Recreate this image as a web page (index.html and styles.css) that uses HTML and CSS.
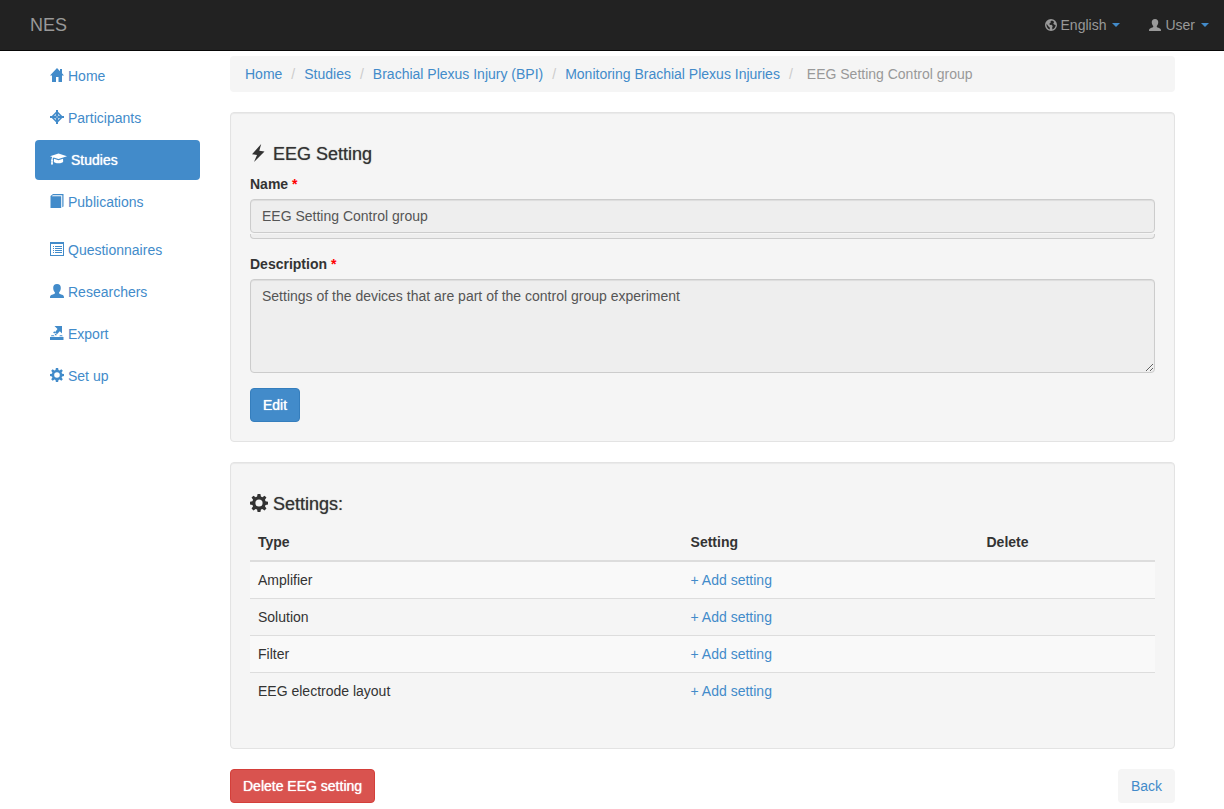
FILE: index.html
```
<!DOCTYPE html>
<html lang="en">
<head>
<meta charset="utf-8">
<meta name="viewport" content="width=device-width, initial-scale=1">
<title>NES - EEG Setting</title>
<link rel="stylesheet" href="styles.css">
</head>
<body>
<svg class="sprite" aria-hidden="true">
  <symbol id="i-home" viewBox="0 0 14 14"><path d="M7 0 0 7.500h2V14h4V9h2.500v5H12V7.500h2l-2-2.200V1h-2v2.200z"/></symbol>
  <symbol id="i-target" viewBox="0 0 14 14"><path fill-rule="evenodd" d="M6 0h2v1.800L12.200 6H14v2h-1.800L8 12.200V14H6v-1.800L1.800 8H0V6h1.800L6 1.800zM5.800 4 4 5.800h1.800zM8.200 4v1.800H10zM4 8.200 5.800 10V8.200zM8.200 8.200V10L10 8.200zM6.500 6.500v1h1v-1z"/></symbol>
  <symbol id="i-cap" viewBox="0 0 17 14"><path d="M8.500 1.500 17 4.200 8.500 7 3.600 5.400C2.800 6 2.600 6.800 2.600 7.600c.6.400.6 1.100.1 1.500L3 12.500H1l.4-3.400c-.5-.4-.5-1.100.1-1.500 0-1 .2-1.900.8-2.600L0 4.200zM4 6.700l4.500 1.500L13 6.700l.2 2.700c0 2.400-9.400 2.400-9.400 0z"/></symbol>
  <symbol id="i-book" viewBox="0 0 14 14"><path d="M3 0h10.500v12.500l-1.200.8V1.300H2.800L1.800 2.200H11.200V14H.5V2z"/></symbol>
  <symbol id="i-list" viewBox="0 0 14 14"><path fill-rule="evenodd" d="M0 0h14v14H0zM1 2v11h12V2z"/><path d="M3 4h1v1H3zM5 4h7v1H5zM3 6h1v1H3zM5 6h7v1H5zM3 8h1v1H3zM5 8h7v1H5zM3 10h1v1H3zM5 10h7v1H5z"/></symbol>
  <symbol id="i-user" viewBox="0 0 14 14"><path d="M7 0c2.600 0 3.800 1.600 3.800 3.900 0 1.800-.7 3.300-1.700 4.300v1.200c1 .7 3 1.100 4 1.900.7.500.9 1.300.9 2.700H0c0-1.400.2-2.200.9-2.700 1-.8 3-1.200 4-1.900V8.200c-1-1-1.700-2.500-1.700-4.300C3.200 1.600 4.400 0 7 0z"/></symbol>
  <symbol id="i-export" viewBox="0 0 14 14"><path d="M4.500 0H12v7.500L9.800 5.300 7 8.300 5 6.300 7.500 3zM4.300 5.200l1.200 1.200-1.200 1.200-1.200-1.200zM5.500 7.500 7 9 5.800 9.600 4.600 8.600z"/><path d="M0 11h13.500v3H0zM1.500 9.200h2.300l.8 1H.8zM10 9.200h2l.8 1H9.200z"/></symbol>
  <symbol id="i-cog" viewBox="0 0 14 14"><path fill-rule="evenodd" d="M5.900 0h2.200l.4 2 1.100.5L11.300 1.300l1.500 1.500-1.200 1.700.5 1.200 1.900.3v2.100l-1.900.4-.5 1.100 1.200 1.700-1.500 1.500-1.700-1.200-1.100.5-.4 1.900H5.900l-.4-1.900-1.100-.5-1.700 1.200-1.500-1.500 1.200-1.700-.5-1.100L0 8.100V6l1.900-.3.500-1.200L1.200 2.800l1.500-1.500 1.700 1.200L5.500 2zM7 4.200a2.800 2.800 0 1 0 0 5.600 2.800 2.800 0 0 0 0-5.600z"/></symbol>
  <symbol id="i-globe" viewBox="0 0 14 14"><path fill-rule="evenodd" d="M7 0a7 7 0 1 1 0 14A7 7 0 0 1 7 0zM8 1.700 6.300 3l.4 1.200L5 5.500 5.800 7 7.500 6.800 9 8.300 8.400 10l.2 2.200c2.200-.7 3.800-2.700 3.800-5.200L10.500 6.500l-.8-1.300 1-1.800C9.900 2.500 9 1.900 8 1.700zM1.900 5.600C1.200 8.700 3 11.500 5.700 12.300L5.500 10 3.800 8.500z"/></symbol>
  <symbol id="i-flash" viewBox="0 0 18 18"><path d="M11.200 0 2 10.300l5 .7-3 7L14.500 7.500 9.300 6.700z"/></symbol>
</svg>

<header class="navbar">
  <a class="brand" href="#">NES</a>
  <nav class="nav-menus" aria-label="Account">
    <button class="nav-toggle" type="button"><svg class="icon icon-sm" aria-hidden="true"><use href="#i-globe"/></svg>English<span class="caret"></span></button>
    <button class="nav-toggle" type="button"><svg class="icon icon-sm" aria-hidden="true"><use href="#i-user"/></svg>User<span class="caret"></span></button>
  </nav>
</header>

<div class="layout">
  <nav class="sidebar" aria-label="Main">
    <ul class="pills">
      <li><a href="#"><svg class="icon" aria-hidden="true"><use href="#i-home"/></svg>Home</a></li>
      <li><a href="#"><svg class="icon" aria-hidden="true"><use href="#i-target"/></svg>Participants</a></li>
      <li><a class="active" href="#" aria-current="page"><svg class="icon icon-wide" aria-hidden="true"><use href="#i-cap"/></svg>Studies</a></li>
      <li><a href="#"><svg class="icon" aria-hidden="true"><use href="#i-book"/></svg>Publications</a></li>
    </ul>
    <ul class="pills">
      <li><a href="#"><svg class="icon" aria-hidden="true"><use href="#i-list"/></svg>Questionnaires</a></li>
      <li><a href="#"><svg class="icon" aria-hidden="true"><use href="#i-user"/></svg>Researchers</a></li>
      <li><a href="#"><svg class="icon" aria-hidden="true"><use href="#i-export"/></svg>Export</a></li>
      <li><a href="#"><svg class="icon" aria-hidden="true"><use href="#i-cog"/></svg>Set up</a></li>
    </ul>
  </nav>

  <main class="content">
    <ol class="breadcrumb">
      <li><a href="#">Home</a></li>
      <li><a href="#">Studies</a></li>
      <li><a href="#">Brachial Plexus Injury (BPI)</a></li>
      <li><a href="#">Monitoring Brachial Plexus Injuries</a></li>
      <li class="current">EEG Setting Control group</li>
    </ol>

    <form class="well">
      <h4 class="title"><svg class="icon icon-lg" aria-hidden="true"><use href="#i-flash"/></svg>EEG Setting</h4>
      <div class="field">
        <label for="name">Name <span class="required">*</span></label>
        <input class="control" id="name" type="text" value="EEG Setting Control group" disabled>
        <div class="control-base"></div>
      </div>
      <div class="field">
        <label for="description">Description <span class="required">*</span></label>
        <textarea class="control" id="description" rows="4" disabled>Settings of the devices that are part of the control group experiment</textarea>
      </div>
      <button class="btn btn-primary" type="button">Edit</button>
    </form>

    <section class="well">
      <h4 class="title"><svg class="icon icon-lg" aria-hidden="true"><use href="#i-cog"/></svg>Settings:</h4>
      <table class="table">
        <thead>
          <tr><th class="col-type">Type</th><th class="col-setting">Setting</th><th>Delete</th></tr>
        </thead>
        <tbody>
          <tr><td>Amplifier</td><td><a href="#">+ Add setting</a></td><td></td></tr>
          <tr><td>Solution</td><td><a href="#">+ Add setting</a></td><td></td></tr>
          <tr><td>Filter</td><td><a href="#">+ Add setting</a></td><td></td></tr>
          <tr><td>EEG electrode layout</td><td><a href="#">+ Add setting</a></td><td></td></tr>
        </tbody>
      </table>
    </section>

    <div class="actions">
      <button class="btn btn-danger" type="button">Delete EEG setting</button>
      <a class="btn btn-back" href="#">Back</a>
    </div>
  </main>
</div>
</body>
</html>
```

FILE: styles.css
```
* { box-sizing: border-box; }

body {
  margin: 0;
  background: #fff;
  color: #333;
  font: 14px/20px "Helvetica Neue", "Liberation Sans", Arial, sans-serif;
}

a { color: #428bca; text-decoration: none; }
ul, ol { list-style: none; margin: 0; padding: 0; }
button, input, textarea { font: inherit; }

.sprite { position: absolute; width: 0; height: 0; }

.icon { flex: none; width: 14px; height: 14px; margin-right: 4px; fill: currentColor; }
.icon-sm { width: 12px; height: 12px; }
.icon-wide { width: 17px; }
.icon-lg { width: 18px; height: 18px; margin-right: 5px; }

.navbar {
  display: flex;
  align-items: center;
  justify-content: space-between;
  min-height: 51px;
  padding: 0 15px 0 30px;
  background: #222;
  border-bottom: 1px solid #080808;
}
.brand { color: #999; font-size: 18px; }
.nav-menus { display: flex; gap: 29px; }
.nav-toggle {
  display: flex;
  align-items: center;
  padding: 0;
  border: 0;
  background: none;
  color: #999;
}
.caret {
  margin-left: 6px;
  border: 4px solid transparent;
  border-top-color: #428bca;
  border-bottom: 0;
}

.layout { display: flex; gap: 30px; padding: 5px 49px 0 35px; }
.sidebar { flex: none; width: 165px; }
.pills { display: grid; gap: 2px; margin-bottom: 8px; }
.pills a {
  display: flex;
  align-items: center;
  padding: 10px 15px;
  border-radius: 4px;
}
.pills .icon { margin-bottom: 2px; }
.pills .active { background: #428bca; color: #fff; text-shadow: 0 0 1px #fff; }

.content { flex: 1; min-width: 0; }

.breadcrumb {
  display: flex;
  flex-wrap: wrap;
  margin-bottom: 20px;
  padding: 8px 15px;
  background: #f5f5f5;
  border-radius: 4px;
}
.breadcrumb li + li::before { content: "/"; padding: 0 9px; color: #ccc; }
.breadcrumb .current { color: #999; }
.breadcrumb .current::before { padding-right: 14px; }

.well {
  margin-bottom: 20px;
  padding: 19px;
  background: #f5f5f5;
  border: 1px solid #e3e3e3;
  border-radius: 4px;
  box-shadow: inset 0 1px 1px rgba(0, 0, 0, .05);
}
.title {
  display: flex;
  align-items: center;
  margin: 12px 0 10px;
  font-size: 18px;
  font-weight: 500;
  text-shadow: 0 0 1px #777;
}
.title .icon { margin-bottom: 2px; }

.field { margin-bottom: 15px; }
.field label { display: block; margin-bottom: 5px; font-weight: bold; }
.required { color: #f00; }
.control {
  display: block;
  width: 100%;
  padding: 6px 11px;
  background: #eee;
  border: 1px solid #ccc;
  border-radius: 4px;
  box-shadow: inset 0 1px 1px rgba(0, 0, 0, .075);
  color: #555;
  line-height: 20px;
}
input.control { height: 34px; }
textarea.control { resize: vertical; }
.control-base {
  height: 5px;
  margin-top: 1px;
  background: #eee;
  border: 1px solid #ccc;
  border-top: 0;
  border-radius: 0 0 4px 4px;
}

.btn {
  display: inline-block;
  padding: 6px 12px;
  border: 1px solid transparent;
  border-radius: 4px;
  line-height: 20px;
}
.btn-primary { background: #428bca; border-color: #357ebd; color: #fff; text-shadow: 0 0 1px #fff; }
.btn-danger { background: #d9534f; border-color: #d43f3a; color: #fff; text-shadow: 0 0 1px #fff; }
.btn-back { background: #f5f5f5; }
form .btn { display: block; }

.table {
  width: 100%;
  margin-bottom: 19px;
  border-collapse: collapse;
  table-layout: fixed;
}
.table th, .table td { padding: 8px; text-align: left; }
.table th { border-bottom: 2px solid #ddd; }
.table td { border-top: 1px solid #ddd; height: 37px; }
.table tbody tr:nth-child(odd) { background: #f9f9f9; }
.col-type { width: 47.8%; }
.col-setting { width: 32.7%; }

.actions { display: flex; justify-content: space-between; padding-bottom: 5px; }
```
